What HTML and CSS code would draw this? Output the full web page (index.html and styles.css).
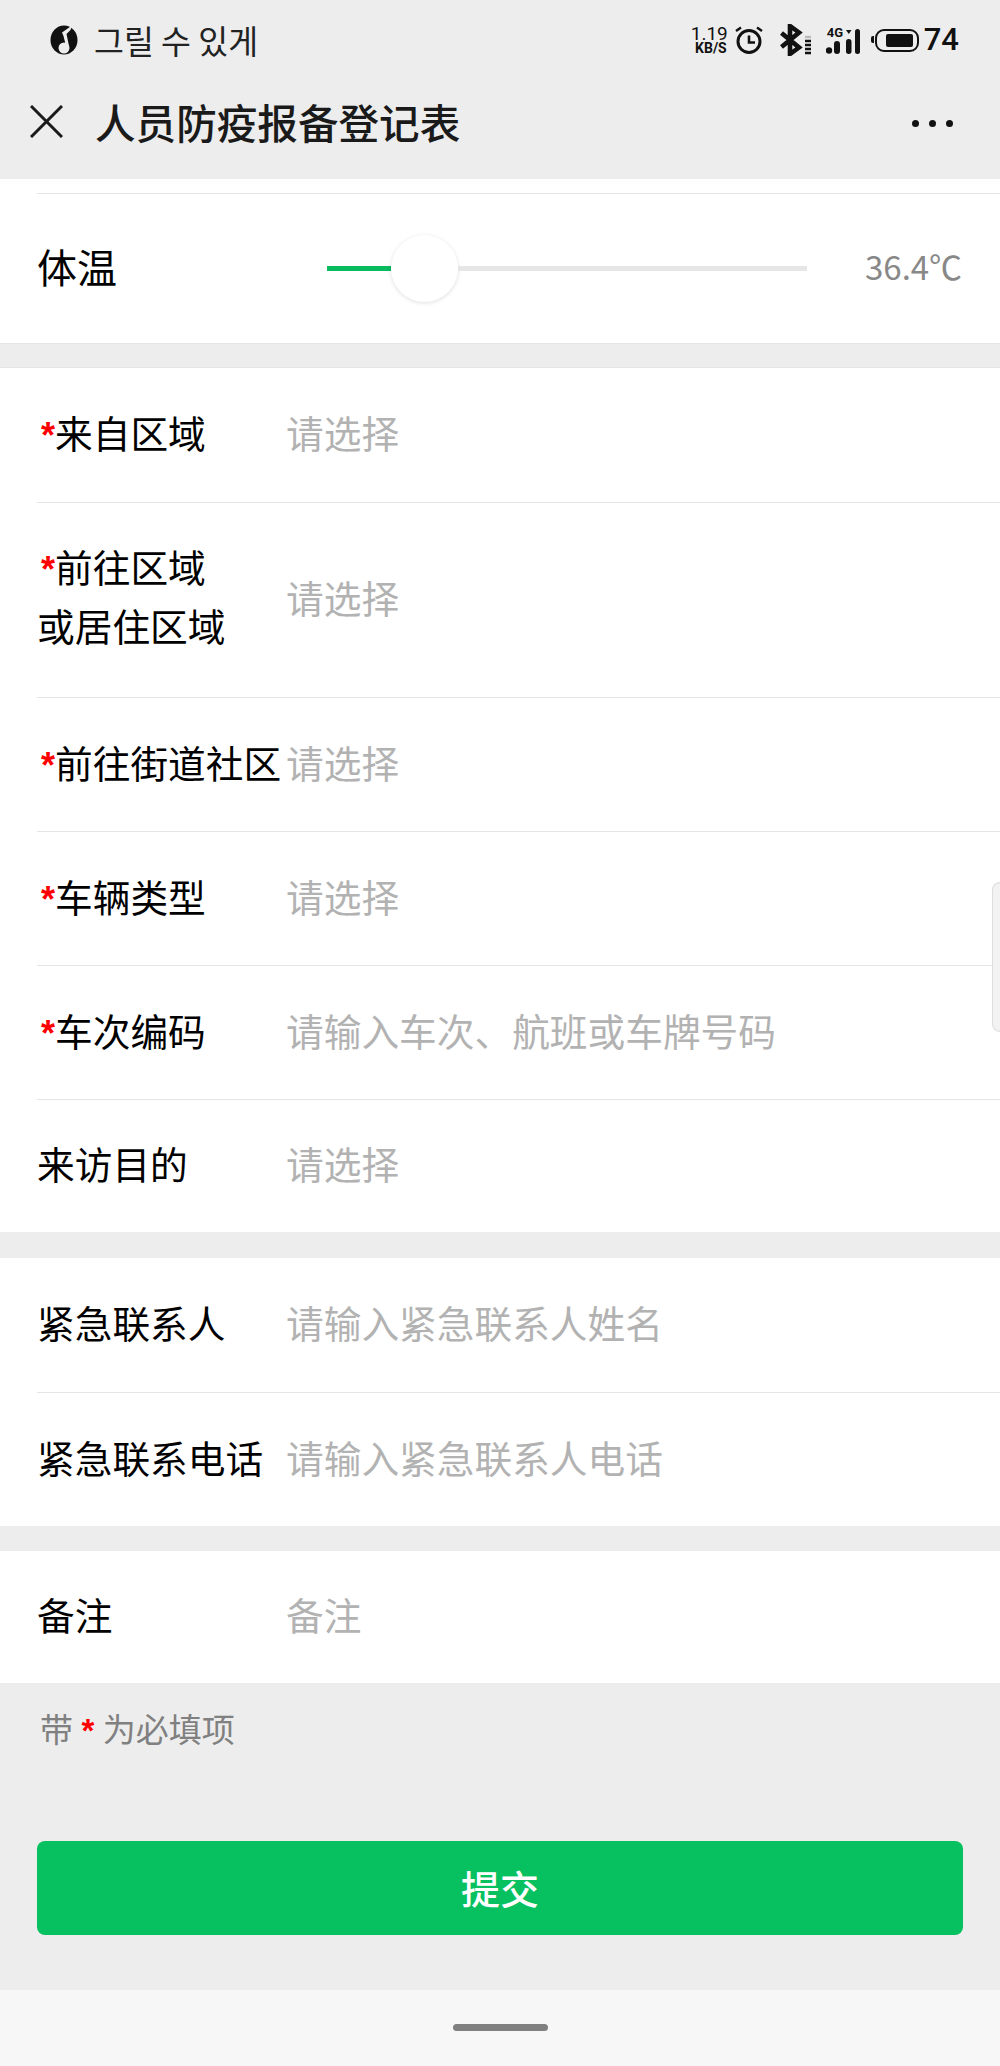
FILE: index.html
```html
<!DOCTYPE html>
<html lang="zh-CN">
<head>
    <meta charset="UTF-8">
    <meta name="viewport" content="width=device-width, initial-scale=1.0">
    <title>人员防疫报备登记表</title>
    <link rel="stylesheet" href="styles.css">
</head>
<body>
    <div class="status-bar">
        <div class="status-left">
            <svg class="app-icon" width="28" height="30" viewBox="0 0 28 30">
                <ellipse cx="14" cy="15" rx="13.500" ry="14.500" fill="#111"/>
                <path d="M12 7.500L22 0.500 20.500 5 16.500 9 19 21H16L13.500 11z" fill="#ededed"/>
                <circle cx="14" cy="23" r="5.500" fill="#ededed"/>
            </svg>
            <span class="status-title">그릴 수 있게</span>
        </div>
        <div class="status-right">
            <div class="net-speed">1.19<br>KB/S</div>
            <svg class="icon-alarm" width="28" height="28" viewBox="0 0 28 28">
                <circle cx="14" cy="15.500" r="11" fill="none" stroke="#111" stroke-width="3"/>
                <path d="M14 9.500V16.500H20" fill="none" stroke="#111" stroke-width="2.600"/>
                <path d="M1 5L6 1.500M27 5L22 1.500" stroke="#111" stroke-width="2.400"/>
            </svg>
            <svg class="icon-bt" width="31" height="32" viewBox="0 0 31 32">
                <path d="M1.500 9L19 23.500 10 30V2L19 8.500 1.500 23" fill="none" stroke="#111" stroke-width="4.600"/>
                <path d="M25 13h6" stroke="#bbb" stroke-width="2.400"/>
                <path d="M25 17h6M25 21h6M25 25h6M25 29h6" stroke="#111" stroke-width="2.600"/>
            </svg>
            <div class="signal">
                <span class="signal-tag">4G</span>
                <svg width="34" height="26" viewBox="0 0 34 26">
                    <circle cx="3" cy="21.500" r="3.200" fill="#111"/>
                    <rect x="8" y="12" width="6" height="13" rx="3" fill="#111"/>
                    <rect x="20" y="10" width="5.500" height="15" rx="2.700" fill="#111"/>
                    <path d="M20 1h5.500l-2.700 4z" fill="#111"/>
                    <rect x="29" y="0" width="5" height="25" rx="2.500" fill="#111"/>
                </svg>
            </div>
            <div class="battery"><span class="battery-level"></span></div>
            <span class="battery-num">74</span>
        </div>
    </div>

    <div class="nav-bar">
        <svg class="nav-close" width="33" height="33" viewBox="0 0 33 33">
            <path d="M1 1L32 32M32 1L1 32" stroke="#1a1a1a" stroke-width="3"/>
        </svg>
        <h1 class="nav-title">人员防疫报备登记表</h1>
        <div class="nav-more"><i></i><i></i><i></i></div>
    </div>

    <div class="section section-slider">
        <div class="row row-slider">
            <div class="label">体温</div>
            <div class="slider">
                <div class="slider-fill"></div>
                <div class="slider-knob"></div>
                <div class="slider-track"></div>
            </div>
            <div class="slider-value">36.4℃</div>
        </div>
    </div>

    <div class="section section-area">
        <div class="row"><div class="label"><span class="req">*</span>来自区域</div><div class="ph">请选择</div></div>
        <div class="row row-tall"><div class="label"><span class="req">*</span>前往区域<br>或居住区域</div><div class="ph">请选择</div></div>
        <div class="row"><div class="label"><span class="req">*</span>前往街道社区</div><div class="ph">请选择</div></div>
        <div class="row"><div class="label"><span class="req">*</span>车辆类型</div><div class="ph">请选择</div></div>
        <div class="row"><div class="label"><span class="req">*</span>车次编码</div><div class="ph">请输入车次、航班或车牌号码</div></div>
        <div class="row row-end"><div class="label">来访目的</div><div class="ph">请选择</div></div>
    </div>

    <div class="section section-contact">
        <div class="row"><div class="label">紧急联系人</div><div class="ph">请输入紧急联系人姓名</div></div>
        <div class="row"><div class="label">紧急联系电话</div><div class="ph">请输入紧急联系人电话</div></div>
    </div>

    <div class="section section-note">
        <div class="row"><div class="label">备注</div><div class="ph">备注</div></div>
    </div>

    <p class="tip">带 <span class="req">*</span> 为必填项</p>

    <div class="submit-wrap">
        <button class="submit">提交</button>
    </div>

    <div class="home-bar"><span class="home-handle"></span></div>

    <div class="side-handle"></div>
</body>
</html>
```

FILE: styles.css
```css
* {
    box-sizing: border-box;
}
body {
    margin: 0;
    height: 2066px;
    overflow: hidden;
    position: relative;
    display: flex;
    flex-direction: column;
    background-color: #ededed;
    color: #000;
    font-family: "Noto Sans CJK SC", "Noto Sans", sans-serif;
    font-size: 37.7px;
}

/* status bar */
.status-bar {
    height: 80px;
    padding: 0 41px 0 50px;
    display: flex;
    align-items: center;
    justify-content: space-between;
}
.status-left {
    display: flex;
    align-items: center;
    gap: 16px;
}
.status-title {
    font-family: "Noto Sans CJK KR", sans-serif;
    font-size: 32.500px;
    line-height: 40px;
    color: #222;
}
.status-right {
    display: flex;
    align-items: center;
    color: #111;
}
.net-speed {
    width: 36px;
    margin-right: 8px;
    text-align: right;
    font-family: Roboto, sans-serif;
    font-size: 14px;
    line-height: 13px;
    font-weight: bold;
}
.net-speed::first-line {
    font-size: 19px;
    line-height: 16px;
    font-weight: normal;
}
.icon-alarm {
    margin-right: 17px;
}
.signal {
    position: relative;
    margin-left: 15px;
    margin-top: 4px;
}
.signal svg {
    display: block;
}
.signal-tag {
    position: absolute;
    left: 1px;
    top: -3px;
    font-family: Roboto, sans-serif;
    font-size: 13px;
    line-height: 14px;
    font-weight: bold;
}
.battery {
    position: relative;
    width: 44px;
    height: 23px;
    margin-left: 15px;
    padding: 3px 4px 3px 9px;
    border: 2px solid #111;
    border-radius: 9px;
}
.battery::before {
    content: "";
    position: absolute;
    left: -6px;
    top: 5px;
    width: 3px;
    height: 7px;
    background-color: #111;
    border-radius: 2px 0 0 2px;
}
.battery-level {
    display: block;
    height: 100%;
    background-color: #111;
    border-radius: 2px;
}
.battery-num {
    margin-left: 5px;
    font-family: Roboto, sans-serif;
    font-size: 31px;
    font-weight: 500;
    line-height: 30px;
}

/* nav */
.nav-bar {
    height: 99px;
    padding: 0 0 16px 30px;
    display: flex;
    align-items: center;
}
.nav-title {
    margin: 0 0 0 32px;
    flex: 1;
    font-size: 40.600px;
    font-weight: 500;
    line-height: 56px;
    color: #1a1a1a;
}
.nav-close {
    flex-shrink: 0;
}
.nav-more {
    display: flex;
    gap: 10px;
    margin: 3px 47px 0 0;
}
.nav-more i {
    width: 7px;
    height: 7px;
    border-radius: 50%;
    background-color: #111;
}

/* form */
.section {
    background-color: #fff;
}
.section-slider {
    height: 165px;
    padding-top: 14px;
    border-bottom: 1px solid #e5e5e5;
}
.section-area {
    margin-top: 23px;
    border-top: 1px solid #e5e5e5;
}
.section-contact {
    margin-top: 26px;
}
.section-note {
    margin-top: 25px;
}
.row {
    height: 134px;
    margin-left: 37px;
    padding-bottom: 7px;
    display: flex;
    align-items: center;
    border-top: 1px solid #e5e5e5;
}
.section-area .row:first-child,
.section-contact .row:first-child,
.section-note .row:first-child {
    border-top: none;
}
.row-tall {
    height: 195px;
}
.row-tall .label {
    margin-bottom: 4px;
}
.row-end {
    height: 133px;
}
.row-slider {
    height: 150px;
    padding-bottom: 1px;
}
.section-note .row {
    height: 132px;
}
.label {
    width: 249px;
    flex-shrink: 0;
    line-height: 59px;
}
.row-slider .label {
    margin-bottom: 3px;
    font-size: 40px;
}
.req {
    color: #f00;
    font-family: "Liberation Sans", sans-serif;
    font-weight: bold;
}
.label .req {
    display: inline-block;
    width: 18px;
    font-size: 36px;
    line-height: 1;
    text-align: right;
}
.tip .req {
    margin: 0 1px;
}
.ph {
    color: #b2b2b2;
}

/* slider */
.slider {
    width: 480px;
    height: 67px;
    margin-left: 41px;
    display: flex;
    align-items: center;
}
.slider-fill {
    width: 64px;
    height: 5px;
    background-color: #09bb5f;
}
.slider-knob {
    width: 67px;
    height: 67px;
    flex-shrink: 0;
    border-radius: 50%;
    background-color: #fff;
    box-shadow: 0 1px 4px rgba(0, 0, 0, 0.13);
}
.slider-track {
    flex: 1;
    height: 5px;
    background-color: #e6e6e6;
}
.slider-value {
    margin: 0 0 4px 58px;
    font-size: 33px;
    color: #888;
}

/* bottom */
.tip {
    margin: 0;
    padding: 22px 40px 0;
    height: 100px;
    font-size: 33px;
    line-height: 46px;
    color: #808080;
}
.submit-wrap {
    height: 207px;
    padding: 58px 37px 0;
}
.submit {
    display: block;
    width: 100%;
    height: 94px;
    padding-bottom: 3px;
    border: none;
    border-radius: 8px;
    background-color: #07c160;
    color: #fff;
    font-family: inherit;
    font-size: 39px;
    font-weight: 500;
}
.home-bar {
    flex: 1;
    background-color: #f7f7f7;
    display: flex;
    justify-content: center;
    padding-top: 34px;
}
.home-handle {
    width: 95px;
    height: 7px;
    border-radius: 4px;
    background-color: #808080;
}
.side-handle {
    position: absolute;
    top: 882px;
    right: 0;
    width: 8px;
    height: 150px;
    background-color: #f2f2f2;
    border: 1px solid #ddd;
    border-right: none;
    border-radius: 8px 0 0 8px;
}
```
